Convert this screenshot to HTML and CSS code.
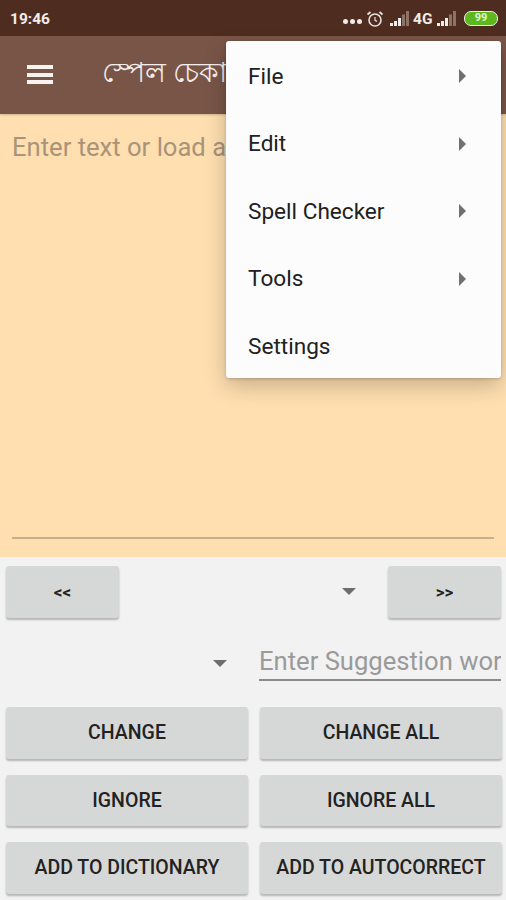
FILE: index.html
```html
<!DOCTYPE html>
<html lang="bn">

<head>
  <meta charset="UTF-8" />
  <meta name="viewport" content="width=device-width, initial-scale=1.0" />
  <title>Spell Checker</title>
  <link rel="stylesheet" href="styles.css">
</head>

<body>
  <div class="screen">
    <div class="status-bar">
      <span class="clock">19:46</span>
      <div class="status-icons">
        <span class="dots"><i></i><i></i><i></i></span>
        <svg class="alarm" width="18" height="18" viewBox="0 0 18 18" fill="none" stroke="#eadfda">
          <circle cx="9" cy="10" r="6" stroke-width="1.6" />
          <path d="M9 7v3.4l2 1" stroke-width="1.2" />
          <path d="M1.5 4.5 4.5 2M16.5 4.5 13.5 2" stroke-width="1.8" />
        </svg>
        <svg class="signal" width="20" height="15" viewBox="0 0 20 15">
          <rect x="0" y="12" width="3" height="3" fill="#eee" />
          <rect x="4" y="10" width="3" height="5" fill="#eee" />
          <rect x="8" y="7" width="3" height="8" fill="#eee" />
          <rect x="12" y="3.5" width="3" height="11.5" fill="#8d7268" />
          <rect x="16" y="0" width="3" height="15" fill="#8d7268" />
        </svg>
        <span class="net">4G</span>
        <svg class="signal" width="20" height="15" viewBox="0 0 20 15">
          <rect x="0" y="12" width="3" height="3" fill="#eee" />
          <rect x="4" y="10" width="3" height="5" fill="#eee" />
          <rect x="8" y="7" width="3" height="8" fill="#eee" />
          <rect x="12" y="3.5" width="3" height="11.5" fill="#8d7268" />
          <rect x="16" y="0" width="3" height="15" fill="#8d7268" />
        </svg>
        <span class="battery">99</span>
      </div>
    </div>

    <div class="toolbar">
      <div class="burger"><i></i><i></i><i></i></div>
      <div class="title">স্পেল চেকার</div>
    </div>

    <div class="editor">
      <div class="editor-hint">Enter text or load a file</div>
      <div class="editor-line"></div>
    </div>

    <div class="controls">
      <div class="nav-row">
        <button class="btn nav-btn">&lt;&lt;</button>
        <div class="spinner"><span class="caret"></span></div>
        <button class="btn nav-btn">&gt;&gt;</button>
      </div>

      <div class="suggest-row">
        <div class="spinner suggest-spinner"><span class="caret"></span></div>
        <div class="suggest-input">Enter Suggestion word</div>
      </div>

      <div class="action-grid">
        <button class="btn">CHANGE</button>
        <button class="btn">CHANGE ALL</button>
        <button class="btn">IGNORE</button>
        <button class="btn">IGNORE ALL</button>
        <button class="btn">ADD TO DICTIONARY</button>
        <button class="btn">ADD TO AUTOCORRECT</button>
      </div>
    </div>

    <div class="menu">
      <div class="menu-item">File <span class="arrow"></span></div>
      <div class="menu-item">Edit <span class="arrow"></span></div>
      <div class="menu-item">Spell Checker <span class="arrow"></span></div>
      <div class="menu-item">Tools <span class="arrow"></span></div>
      <div class="menu-item">Settings</div>
    </div>
  </div>
</body>

</html>
```

FILE: styles.css
```css
* {
  box-sizing: border-box;
}

body {
  margin: 0;
  background-color: #f2f2f2;
  font-family: Roboto, "Noto Sans", sans-serif;
}

.screen {
  position: relative;
  width: 506px;
  height: 900px;
  overflow: hidden;
  display: flex;
  flex-direction: column;
}

/* status bar */
.status-bar {
  height: 36px;
  flex-shrink: 0;
  background-color: #4e2d20;
  display: flex;
  align-items: center;
  justify-content: space-between;
  padding: 1px 8px 0 10px;
  color: #f2ece9;
}

.clock {
  font-size: 15.5px;
  font-weight: 700;
}

.status-icons {
  display: flex;
  align-items: center;
}

.dots {
  display: flex;
  gap: 2px;
  margin: 6px 4px 0 0;
}

.dots i {
  width: 5px;
  height: 5px;
  border-radius: 50%;
  background: #f2ece9;
}

.alarm {
  margin-right: 6px;
}

.net {
  width: 20px;
  margin: 0 4px 0 3px;
  font-size: 15.5px;
  font-weight: 700;
}

.battery {
  width: 34px;
  height: 15px;
  margin-left: 7px;
  border-radius: 7px;
  border: 1.5px solid #f2ece9;
  background-color: #5cb81e;
  color: #e4f5d5;
  font-size: 11px;
  font-weight: 700;
  line-height: 12px;
  text-align: center;
}

/* toolbar */
.toolbar {
  height: 78px;
  flex-shrink: 0;
  background-color: #795548;
  display: flex;
  align-items: center;
  padding: 0 0 0 27px;
  box-shadow: 0 1px 2px rgba(0, 0, 0, 0.2);
  z-index: 1;
}

.burger {
  display: flex;
  flex-direction: column;
  gap: 3.5px;
  width: 26px;
  margin-top: -1px;
}

.burger i {
  height: 4px;
  background: #f7f3f1;
}

.title {
  margin-left: 49px;
  color: #f3eeeb;
  font-size: 27.5px;
  white-space: nowrap;
}

/* editor */
.editor {
  height: 443px;
  flex-shrink: 0;
  background-color: #ffdfb0;
  display: flex;
  flex-direction: column;
  justify-content: space-between;
  padding: 19px 12px 18px;
}

.editor-hint {
  color: #a89478;
  font-size: 25.6px;
  line-height: 28px;
  white-space: nowrap;
}

.editor-line {
  height: 2px;
  background-color: #c9b08d;
}

/* controls */
.controls {
  flex: 1;
  padding: 9px 5px 0 6px;
  display: flex;
  flex-direction: column;
}

.btn {
  height: 51.5px;
  padding: 0;
  border: none;
  border-radius: 3px;
  background-color: #d6d7d7;
  color: #222;
  font-family: inherit;
  font-size: 19.5px;
  font-weight: 500;
  white-space: nowrap;
  box-shadow: 0 2px 2px rgba(0, 0, 0, 0.25);
}

.nav-row {
  display: flex;
  align-items: center;
}

.nav-btn {
  width: 113px;
  flex-shrink: 0;
  font-size: 17px;
  font-weight: 700;
}

.spinner {
  flex: 1;
  display: flex;
  justify-content: flex-end;
  padding-right: 32px;
}

.caret {
  width: 0;
  height: 0;
  border-left: 7px solid transparent;
  border-right: 7px solid transparent;
  border-top: 7px solid #6e6e6e;
}

.suggest-row {
  display: flex;
  align-items: center;
  gap: 11px;
  margin-top: 16px;
  height: 47.5px;
}

.suggest-spinner {
  width: 242px;
  flex: none;
  padding-right: 21px;
  padding-top: 12px;
}

.suggest-input {
  flex: 1;
  height: 47.5px;
  overflow: hidden;
  border-bottom: 2px solid #8a8a8a;
  color: #9a9a9a;
  font-size: 25.6px;
  line-height: 55px;
  white-space: nowrap;
}

.action-grid {
  display: grid;
  grid-template-columns: 242px 242px;
  column-gap: 12px;
  row-gap: 16px;
  margin-top: 26px;
}

/* popup menu */
.menu {
  position: absolute;
  top: 41px;
  left: 226px;
  width: 275px;
  height: 337px;
  padding-top: 1.5px;
  background-color: #fcfcfc;
  border-radius: 3px;
  box-shadow: 0 8px 22px rgba(0, 0, 0, 0.22), 0 1px 3px rgba(0, 0, 0, 0.18);
  z-index: 2;
}

.menu-item {
  height: 67.5px;
  display: flex;
  align-items: center;
  justify-content: space-between;
  padding: 0 35px 0 22px;
  color: #212121;
  font-size: 22.6px;
}

.arrow {
  width: 0;
  height: 0;
  border-top: 7px solid transparent;
  border-bottom: 7px solid transparent;
  border-left: 7px solid #6f7072;
}
```
